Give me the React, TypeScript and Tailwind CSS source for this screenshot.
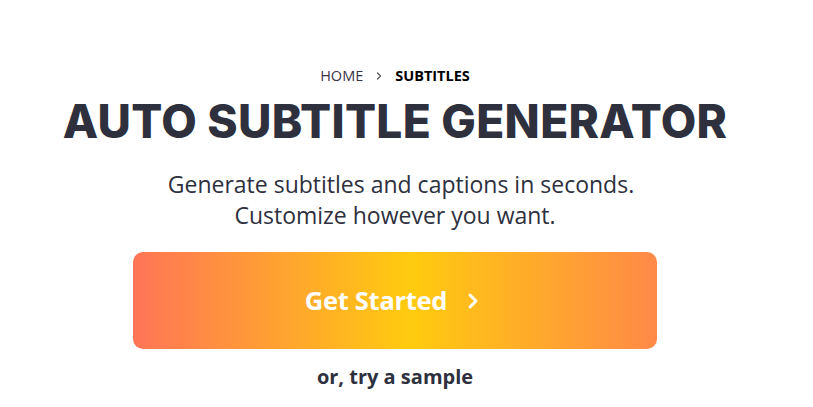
import { ChevronRight } from 'lucide-react'

export default function App() {
  return (
    <div className="min-h-[407px] w-[813px] bg-white font-['Open_Sans',sans-serif] text-[#2e303d]">
      <div className="w-[790px] flex flex-col items-center pt-[66px]">
        {/* Breadcrumb */}
        <nav className="flex items-center gap-[10px] text-[14.5px] leading-[20px]">
          <span className="text-[#3a3346]">HOME</span>
          <ChevronRight size={12} strokeWidth={2.5} className="text-[#555]" />
          <span className="font-bold text-black">SUBTITLES</span>
        </nav>

        <h1 className="mt-[7px] font-['Inter',sans-serif] font-extrabold text-[46px] leading-[56px] tracking-[0.3px] text-[#2e303d]">
          AUTO SUBTITLE GENERATOR
        </h1>

        <p className="mt-[20px] text-center text-[23px] leading-[31px] text-[#2e303d]">
          {'\u00a0\u00a0'}Generate subtitles and captions in seconds.
          <br />
          Customize however you want.
        </p>

        <button className="mt-[21px] w-[524px] h-[97px] rounded-[10px] bg-[linear-gradient(90deg,#ff7457_0%,#ffcb0e_53%,#ff8948_100%)] flex items-center justify-center gap-[14px] text-white">
          <span className="text-[25.5px] font-bold tracking-[-0.3px]">Get Started</span>
          <ChevronRight size={24} strokeWidth={3} />
        </button>

        <a className="mt-[13px] text-[20px] font-bold text-[#2e303d]">or, try a sample</a>
      </div>
    </div>
  )
}
